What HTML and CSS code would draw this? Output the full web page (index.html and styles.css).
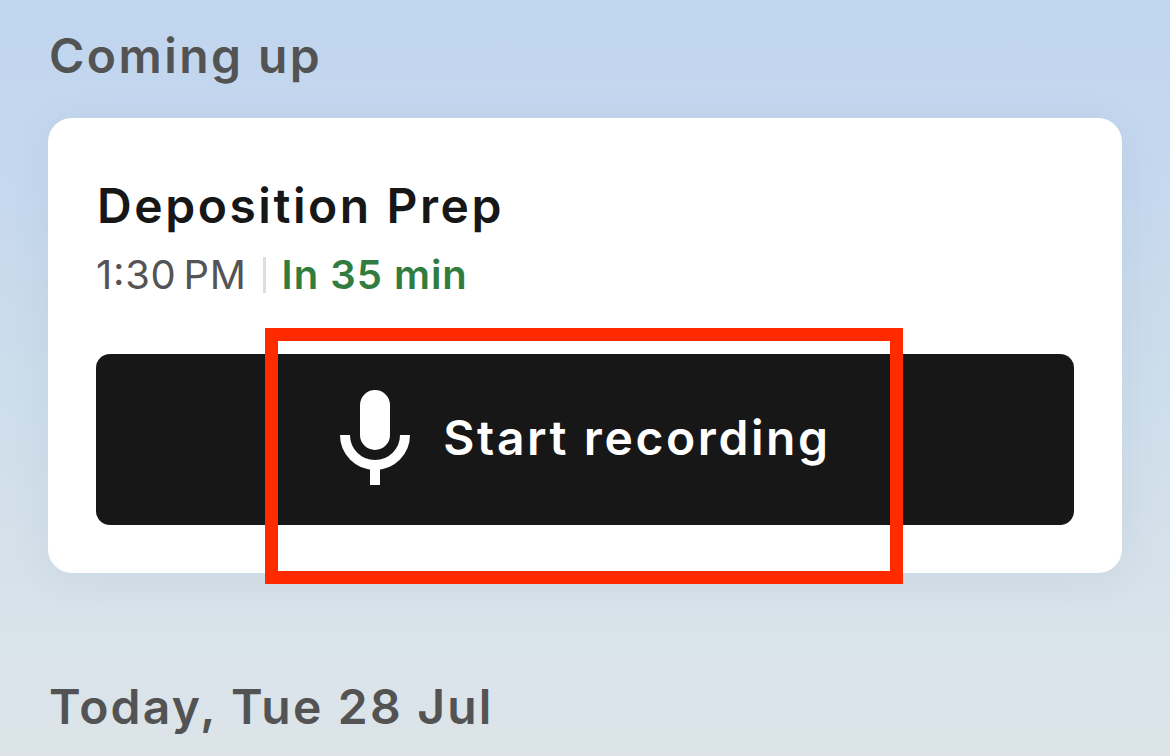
FILE: index.html
```html
<!DOCTYPE html>
<html lang="en">
<head>
<meta charset="utf-8">
<title>Coming up</title>
<link rel="stylesheet" href="styles.css">
</head>
<body>
<main class="screen">
  <h2 class="section-title">Coming up</h2>
  <section class="card">
    <h3 class="event-title">Deposition Prep</h3>
    <div class="event-meta">
      <span class="event-time">1:30 PM</span>
      <span class="event-divider"></span>
      <span class="event-countdown">In 35 min</span>
    </div>
    <button class="record-button" type="button">
      <svg class="mic-icon" viewBox="0 0 70 95" aria-hidden="true">
        <rect x="20" y="0" width="30" height="60" rx="15" fill="#fff"/>
        <path d="M5 45a30 30 0 0 0 60 0" fill="none" stroke="#fff" stroke-width="10"/>
        <rect x="30" y="72" width="10" height="23" fill="#fff"/>
      </svg>
      <span>Start recording</span>
    </button>
  </section>
  <h2 class="section-title section-title-today">Today, Tue 28 Jul</h2>
  <div class="highlight"></div>
</main>
</body>
</html>
```
FILE: styles.css
```css
* { box-sizing: border-box; }
html, body { margin: 0; height: 100%; }
body { overflow: hidden; font-family: Inter, "Noto Sans", sans-serif; }
.screen {
  position: relative;
  width: 1170px;
  height: 756px;
  padding: 28px 48px 0;
  overflow: hidden;
  background: linear-gradient(180deg, #c0d5ef 0%, #c6d8ee 25%, #cfdeeb 55%, #d9e3ea 85%, #dce4e9 100%);
}
.section-title {
  margin: 0 0 0 1px;
  font-size: 48px;
  line-height: 56px;
  font-weight: 600;
  letter-spacing: 2.45px;
  color: #535353;
}
.card {
  margin-top: 34px;
  height: 455px;
  padding: 58px 48px 48px;
  background: #fff;
  border-radius: 24px;
  box-shadow: 0 8px 40px rgba(70, 100, 130, 0.08);
  display: flex;
  flex-direction: column;
}
.event-title {
  margin: 0 0 0 1px;
  font-size: 48px;
  line-height: 60px;
  font-weight: 600;
  letter-spacing: 2.55px;
  color: #171717;
}
.event-meta {
  margin-top: 16px;
  display: flex;
  align-items: center;
  font-size: 40px;
  line-height: 46px;
}
.event-time { color: #545454; letter-spacing: 0.7px; word-spacing: -5px; font-feature-settings: "case"; }
.event-divider { width: 3px; height: 36px; margin: 0 16px; background: #dedede; }
.event-countdown { color: #317c3f; font-weight: 600; letter-spacing: 1px; }
.record-button {
  margin-top: 56px;
  height: 171px;
  width: 100%;
  padding: 0 0 4px 1px;
  border: 0;
  border-radius: 14px;
  background: #171717;
  color: #fff;
  font: 600 48px/60px Inter, "Noto Sans", sans-serif;
  letter-spacing: 2.6px;
  display: flex;
  align-items: center;
  justify-content: center;
  gap: 33px;
}
.mic-icon { width: 70px; height: 95px; flex: none; }
.section-title-today { margin-top: 106px; letter-spacing: 2.2px; }
.highlight {
  position: absolute;
  left: 265px;
  top: 328px;
  width: 638px;
  height: 256px;
  border: 13px solid #ff2a00;
}
```
